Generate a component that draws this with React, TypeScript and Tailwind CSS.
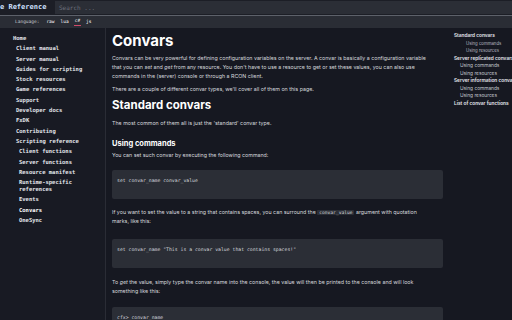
const nav = [
  { label: "Home", level: 0 },
  { label: "Client manual", level: 1 },
  { label: "Server manual", level: 1 },
  { label: "Guides for scripting", level: 1 },
  { label: "Stock resources", level: 1 },
  { label: "Game references", level: 1 },
  { label: "Support", level: 1 },
  { label: "Developer docs", level: 1 },
  { label: "FxDK", level: 1 },
  { label: "Contributing", level: 1 },
  { label: "Scripting reference", level: 1 },
  { label: "Client functions", level: 2 },
  { label: "Server functions", level: 2 },
  { label: "Resource manifest", level: 2 },
  { label: "Runtime-specific references", level: 2 },
  { label: "Events", level: 2 },
  { label: "Convars", level: 2, active: true },
  { label: "OneSync", level: 2 },
];

const toc = [
  { label: "Standard convars", level: 0 },
  { label: "Using commands", level: 2 },
  { label: "Using resources", level: 2 },
  { label: "Server replicated convars", level: 0 },
  { label: "Using commands", level: 1 },
  { label: "Using resources", level: 1 },
  { label: "Server information convars", level: 0 },
  { label: "Using commands", level: 1 },
  { label: "Using resources", level: 1 },
  { label: "List of convar functions", level: 0 },
];

const mono = { fontFamily: '"DejaVu Sans Mono", "Liberation Mono", monospace' };
const sans = { fontFamily: 'Inter, "Noto Sans", sans-serif' };

function Code({ children }: { children: React.ReactNode }) {
  return (
    <pre
      className="h-[29px] w-[331px] rounded-[2px] bg-[#2b2e36] pl-[5px] pt-[7px] text-[4.8px] leading-[7px] text-[#d4d6dc]"
      style={mono}
    >
      {children}
    </pre>
  );
}

export default function App() {
  return (
    <div className="flex h-[320px] w-[512px] flex-col overflow-hidden bg-[#161821]" style={sans}>
      <div className="flex h-[15px] shrink-0 items-stretch bg-[#1c1e26]">
        <div className="w-[55px] text-[7px] font-bold leading-[15px] text-[#cfe0ff]" style={mono}>
          e Reference
        </div>
        <div className="my-[1px] flex flex-1 items-center bg-[#2b2e36] pl-[4px] text-[6px] text-[#6b707b]" style={mono}>
          Search ...
        </div>
      </div>
      <div className="h-[1px] shrink-0 bg-[#5d616a]" />
      <div className="flex h-[12px] shrink-0 items-center gap-[4px] bg-[#2a2d35] pl-[15px] text-[4.5px] text-[#c8cad0]" style={mono}>
        <span className="mr-[2px]">Language:</span>
        <span className="px-[1px] text-white">raw</span>
        <span className="px-[1px] text-white">lua</span>
        <span className="border-b border-[#d04a6a] px-[1px] text-white">c#</span>
        <span className="px-[1px] text-white">js</span>
      </div>
      <div className="flex min-h-0 flex-1 overflow-hidden">
        <div className="flex w-[106px] shrink-0 flex-col gap-[3.3px] border-r border-[#2a2c35] bg-[#181a23] pt-[7px] pr-[4px]" style={mono}>
          {nav.map((n) => (
            <div
              key={n.label}
              className={`text-[5.5px] font-bold leading-[7px] ${n.level === 0 ? "pl-[13px]" : n.level === 1 ? "pl-[16px]" : "pl-[19px]"} ${n.active ? "text-white" : "text-[#e4e6ec]"}`}
            >
              {n.label}
            </div>
          ))}
        </div>
        <div className="flex flex-1 pl-[6px]">
          <div className="w-[331px] shrink-0 text-[5.3px] leading-[9px] text-[#d6d8de]">
            <h1 className="mt-[4px] text-[15px] font-bold leading-[18px] text-white">Convars</h1>
            <p className="mt-[4px] max-w-[320px]">
              Convars can be very powerful for defining configuration variables on the server. A convar is basically a configuration variable
              that you can <em>set</em> and <em>get</em> from any resource. You don't have to use a resource to get or set these values, you can also use
              commands in the (server) console or through a RCON client.
            </p>
            <p className="mt-[4px]">There are a couple of different convar types, we'll cover all of them on this page.</p>
            <h2 className="mt-[3px] text-[11.5px] font-bold leading-[16px] text-white">Standard convars</h2>
            <p className="mt-[6px]">The most common of them all is just the 'standard' convar type.</p>
            <h3 className="mt-[10px] text-[7.5px] font-bold leading-[12px] text-white">Using commands</h3>
            <p className="mt-[1px]">You can set such convar by executing the following command:</p>
            <div className="mt-[10px]">
              <Code>set convar_name convar_value</Code>
            </div>
            <p className="mt-[9px] max-w-[320px]">
              If you want to set the value to a string that contains spaces, you can surround the{" "}
              <code className="rounded-[1px] bg-[#2b2e36] px-[2px] text-[4.6px] leading-[6px]" style={mono}>
                convar_value
              </code>{" "}
              argument with quotation marks, like this:
            </p>
            <div className="mt-[13px]">
              <Code>set convar_name "This is a convar value that contains spaces!"</Code>
            </div>
            <p className="mt-[10px] max-w-[320px]">
              To <em>get</em> the value, simply type the convar name into the console, the value will then be printed to the console and will look
              something like this:
            </p>
            <div className="mt-[11px]">
              <Code>cfx&gt; convar_name</Code>
            </div>
          </div>
          <div className="flex flex-col gap-[2.5px] pl-[11px] pt-[5px] text-[4.8px] leading-[5px]">
            {toc.map((t, i) => (
              <div
                key={i}
                className={`whitespace-nowrap ${t.level === 0 ? "font-semibold text-[#e6e8ee]" : t.level === 1 ? "pl-[6px] text-[#c4c7ce]" : "pl-[12px] text-[4.3px] text-[#b9bcc4]"}`}
              >
                {t.label}
              </div>
            ))}
          </div>
        </div>
      </div>
    </div>
  );
}
